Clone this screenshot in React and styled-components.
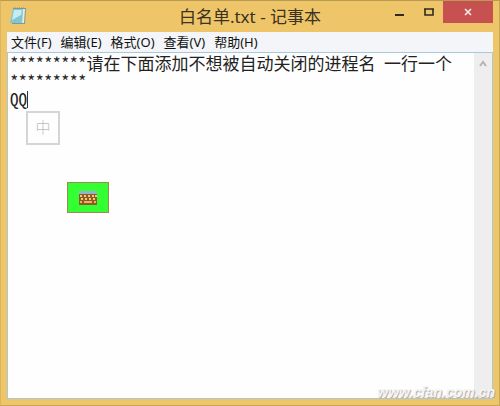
import React, { useState } from "react";
import styled, { createGlobalStyle } from "styled-components";

const GlobalStyle = createGlobalStyle`
  * {
    box-sizing: border-box;
  }
  body {
    margin: 0;
    font-family: "Noto Sans", "Noto Sans CJK SC", sans-serif;
  }
`;

const Window = styled.main`
  position: relative;
  display: flex;
  flex-direction: column;
  min-height: 100vh;
  padding: 0 6px 6px;
  background-color: #eec568;
  border-top: 1px solid #b99a55;
  border-left: 1px solid #dab45f;
  border-right: 1px solid #c9a65a;
  border-bottom: 1px solid #c9a65a;
`;

const TitleBar = styled.header`
  display: grid;
  grid-template-columns: 1fr auto 1fr;
  height: 31px;
`;

const AppIcon = styled.svg`
  width: 18px;
  height: 18px;
  margin: 6px 0 0 2px;
`;

const Title = styled.h1`
  margin: 0;
  font-size: 17px;
  font-weight: 400;
  line-height: 31px;
  color: #3a3222;
`;

const WindowButtons = styled.div`
  display: flex;
  justify-content: flex-end;
`;

const WindowButton = styled.button`
  display: flex;
  align-items: center;
  justify-content: center;
  width: ${({ $close }) => ($close ? "50px" : "29px")};
  height: 22px;
  padding: 0;
  border: none;
  color: ${({ $close }) => ($close ? "#fbeaea" : "#2f2a20")};
  background-color: ${({ $close }) => ($close ? "#c75050" : "transparent")};
`;

const MenuBar = styled.nav`
  display: flex;
  gap: 9px;
  height: 20px;
  padding: 0 4px;
  background-color: #f3f5f8;
`;

const MenuItem = styled.button`
  padding: 0;
  border: none;
  background: none;
  font-family: inherit;
  font-size: 13px;
  line-height: 20px;
  color: #111;
`;

const Editor = styled.section`
  position: relative;
  display: flex;
  flex: 1;
  background-color: #fefefe;
  border: 1px solid #a9c8dc;
`;

const TextArea = styled.textarea`
  flex: 1;
  min-width: 0;
  padding: 1px 0 0 2px;
  border: none;
  outline: none;
  resize: none;
  overflow: hidden;
  background: none;
  font-family: "Noto Sans Mono CJK SC", "Noto Sans CJK SC", monospace;
  font-feature-settings: "hwid";
  font-size: 17px;
  font-weight: 300;
  line-height: 18px;
  color: #222;
`;

const ScrollBar = styled.div`
  display: flex;
  justify-content: center;
  width: 18px;
  padding-top: 7px;
  background-color: #eeeeee;
`;

const Caret = styled.span`
  position: absolute;
  top: 38px;
  left: 19px;
  width: 1px;
  height: 17px;
  background-color: #333;
`;

const ImeMode = styled.div`
  position: absolute;
  top: 58px;
  left: 18px;
  width: 34px;
  height: 34px;
  border: 2px solid #d5d5d5;
  background-color: #fefefe;
  font-size: 15px;
  font-weight: 300;
  line-height: 29px;
  text-align: center;
  color: #bdbdbd;
`;

const SoftKeyboard = styled.button`
  position: absolute;
  top: 129px;
  left: 59px;
  display: flex;
  align-items: center;
  justify-content: center;
  width: 42px;
  height: 31px;
  padding: 0;
  border: 1px solid #a08a50;
  background-color: #33ff33;
`;

const Watermark = styled.span`
  position: absolute;
  right: 4px;
  bottom: 4px;
  font-family: "Liberation Sans", sans-serif;
  font-size: 14px;
  font-style: italic;
  font-weight: 700;
  line-height: 18px;
  color: #f4f4f4;
  text-shadow: 1px 1px 1px #a8a8a8;
`;

const menus = ["文件(F)", "编辑(E)", "格式(O)", "查看(V)", "帮助(H)"];

const keyRows = [
  { y: 5, keys: [1, 5, 9, 13, 16] },
  { y: 8, keys: [2, 6, 10, 14] },
];

const NotepadIcon = () => (
  <AppIcon viewBox="0 0 18 18" aria-hidden="true">
    <path d="M4 1h13l-1 16H3z" fill="#7d9a96" />
    <path d="M4 2h10l-1 14H1z" fill="#83c6d3" />
    <path d="M5 3h8l-1 5-9 5z" fill="#c5ecf0" />
    <path d="M14 2h2l-1 14h-2z" fill="#e3ece6" />
    <path d="M4 1h12" stroke="#8b8f7d" strokeDasharray="1 1" />
  </AppIcon>
);

const KeyboardIcon = () => (
  <svg width="18" height="14" viewBox="0 0 18 14" aria-hidden="true">
    <path d="M0 1h18v13H0z" fill="#8c5a2c" />
    <path d="M0 0h18v3H0z" fill="#8fb5cf" />
    {keyRows.map(({ y, keys }) =>
      keys.map((x) => (
        <rect key={`${x}-${y}`} x={x} y={y - 1} width="2" height="2" fill="#f6c766" />
      ))
    )}
    <path d="M1 11h2M5 11h8M15 11h2" stroke="#f2b04e" strokeWidth="2" />
  </svg>
);

const App = () => {
  const [text, setText] = useState(
    "*********请在下面添加不想被自动关闭的进程名 一行一个\n*********\nQQ"
  );

  return (
    <>
      <GlobalStyle />
      <Window>
        <TitleBar>
          <NotepadIcon />
          <Title>白名单.txt - 记事本</Title>
          <WindowButtons>
            <WindowButton aria-label="最小化">
              <svg width="9" height="10">
                <path d="M0 8h9" stroke="currentColor" strokeWidth="2" />
              </svg>
            </WindowButton>
            <WindowButton aria-label="最大化">
              <svg width="10" height="8">
                <path d="M0 1h10M1 1v6h8V1" fill="none" stroke="currentColor" strokeWidth="1.6" />
              </svg>
            </WindowButton>
            <WindowButton $close aria-label="关闭">
              <svg width="8" height="8">
                <path d="M1 1l6 6M7 1L1 7" stroke="currentColor" strokeWidth="1.6" />
              </svg>
            </WindowButton>
          </WindowButtons>
        </TitleBar>
        <MenuBar>
          {menus.map((menu) => (
            <MenuItem key={menu}>{menu}</MenuItem>
          ))}
        </MenuBar>
        <Editor>
          <TextArea
            aria-label="文本编辑器"
            spellCheck={false}
            value={text}
            onChange={(e) => setText(e.target.value)}
          />
          <ScrollBar>
            <svg width="8" height="7" aria-hidden="true">
              <path d="M1 6l3-4 3 4" fill="none" stroke="#b4b4b4" strokeWidth="2" />
            </svg>
          </ScrollBar>
          <Caret />
          <ImeMode>中</ImeMode>
          <SoftKeyboard aria-label="软键盘">
            <KeyboardIcon />
          </SoftKeyboard>
        </Editor>
        <Watermark>www.cfan.com.cn</Watermark>
      </Window>
    </>
  );
};

export default App;
